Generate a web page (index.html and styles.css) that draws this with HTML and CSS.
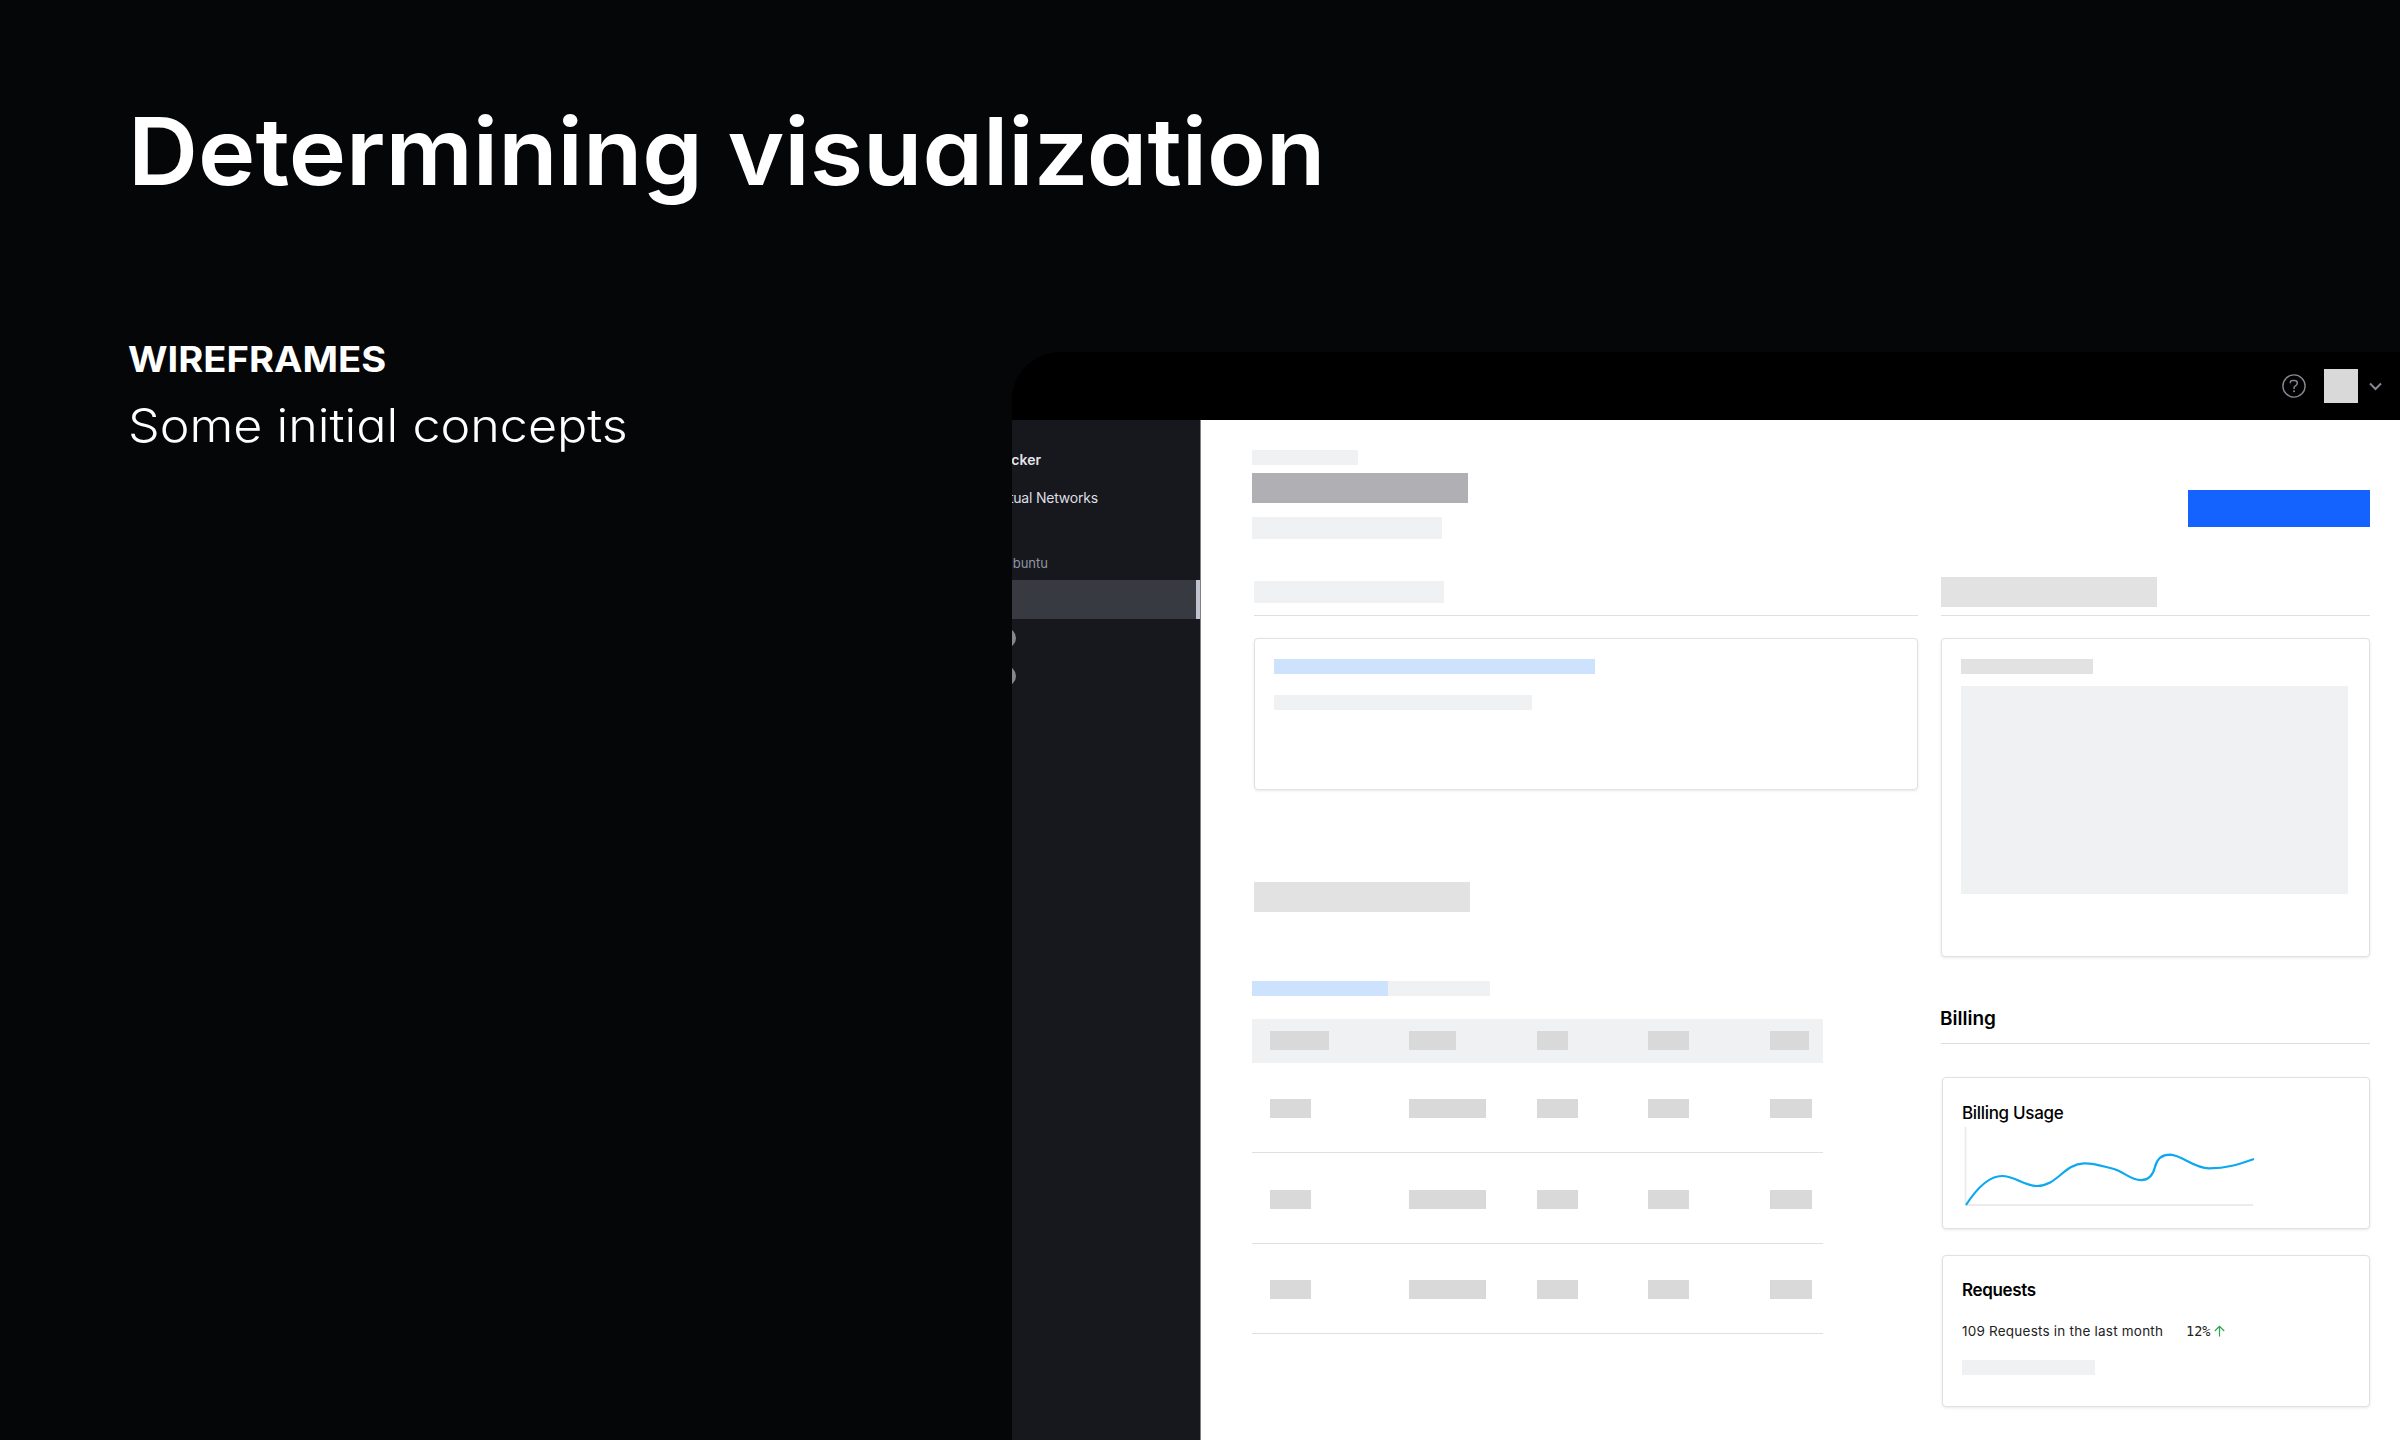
FILE: index.html
```html
<!DOCTYPE html>
<html lang="en">
<head>
<meta charset="utf-8">
<title>Determining visualization</title>
<link rel="stylesheet" href="styles.css">
</head>
<body>
<div class="slide">
  <section class="intro">
    <h1 class="title">Determining visualization</h1>
    <h2 class="eyebrow">WIREFRAMES</h2>
    <p class="lead">Some initial concepts</p>
  </section>
  <section class="app">
    <header class="topbar">
      <svg class="help" width="24" height="24" viewBox="0 0 24 24" fill="none" stroke="#858791" stroke-width="1.4"><circle cx="12" cy="12" r="11.1"/><path d="M8.3 9.300v-.6c0-1.300 1-2.200 2.400-2.200h1.700c1.700 0 2.900 1.100 2.900 2.600 0 1.100-.5 1.900-1.500 2.500-1.200.7-1.800 1.300-1.800 2.300v1" stroke-width="1.500"/><circle cx="12" cy="17.300" r="1" fill="#858791" stroke="none"/></svg>
      <div class="avatar"></div>
      <svg class="chevron" width="13" height="9" viewBox="0 0 13 9" fill="none" stroke="#858791" stroke-width="2"><path d="M1 1.500l5.500 5.500L12 1.500"/></svg>
    </header>
    <div class="body">
      <nav class="side">
        <div class="nav-item nav-strong">cker</div>
        <div class="nav-item nav-link">tual Networks</div>
        <div class="nav-item nav-group">buntu</div>
        <div class="nav-active"></div>
        <div class="nav-row"><span class="dot"></span></div>
        <div class="nav-row"><span class="dot"></span></div>
      </nav>
      <main class="content">
        <div class="page-head">
          <div>
            <div class="bar crumb"></div>
            <div class="bar name"></div>
            <div class="bar subtitle"></div>
          </div>
          <div class="action"></div>
        </div>
        <div class="columns">
          <div class="primary">
            <div class="section-head head-light"><div class="bar label-light"></div></div>
            <div class="card summary">
              <div class="bar link-line"></div>
              <div class="bar text-line"></div>
            </div>
            <div class="bar heading-mid"></div>
            <div class="tabs"><div class="tab-on"></div><div class="tab-off"></div></div>
            <div class="table">
              <div class="tr thead"><i class="w59"></i><i class="w47"></i><i class="w31"></i><i class="w41"></i><i class="w39"></i></div>
              <div class="tr row1"><i class="w41"></i><i class="w77"></i><i class="w41"></i><i class="w41"></i><i class="w42"></i></div>
              <div class="tr row2"><i class="w41"></i><i class="w77"></i><i class="w41"></i><i class="w41"></i><i class="w42"></i></div>
              <div class="tr row3"><i class="w41"></i><i class="w77"></i><i class="w41"></i><i class="w41"></i><i class="w42"></i></div>
            </div>
          </div>
          <aside class="secondary">
            <div class="section-head head-mid"><div class="bar label-mid"></div></div>
            <div class="card preview">
              <div class="bar preview-title"></div>
              <div class="preview-box"></div>
            </div>
            <h3 class="billing">Billing</h3>
            <div class="card usage">
              <h4 class="card-title">Billing Usage</h4>
              <svg class="chart" width="292" height="82" viewBox="0 0 292 82" fill="none">
                <path d="M2.500 2V80M2 80H290" stroke="#ebebed" stroke-width="1.800"/>
                <path d="M3 80C14 63 26 51 39 51C52 51 61 61 74 61C94 61 101 39 121 38.300C132 38 140 41.500 151 44C160 46.500 168 55.200 178 55.200C186 55.200 190 50 192 42C194 34 199 29.700 207 29.700C219 30 231 43.300 246 43.300C264 43.300 275 39.600 291 34" stroke="#0ca8f0" stroke-width="2.200"/>
              </svg>
            </div>
            <div class="card requests">
              <h4 class="card-title">Requests</h4>
              <div class="stat"><span class="stat-text">109 Requests in the last month</span><span class="pct">12%</span><svg class="up" width="11" height="12" viewBox="0 0 11 12" fill="none" stroke="#2da44e" stroke-width="1.200"><path d="M5.500 11.500V1.300M.8 6L5.500 1.300L10.200 6"/></svg></div>
              <div class="bar note"></div>
            </div>
          </aside>
        </div>
      </main>
    </div>
  </section>
</div>
</body>
</html>
```
FILE: styles.css
```css
* { box-sizing: border-box; }
body { margin: 0; background: #050608; }
h1, h2, h3, h4, p { margin: 0; }
.slide {
  width: 2400px; height: 1440px; overflow: hidden;
  display: grid; grid-template-columns: 1012px 1388px;
  background: #050608; color: #fff;
  font-family: Inter, "Liberation Sans", sans-serif;
}
.intro { padding: 95px 0 0 128px; white-space: nowrap; font-feature-settings: "cv11", "ss03"; }
/* Wide display cut: the three headings are stretched horizontally. */
.title, .eyebrow, .lead { transform-origin: 0 50%; }
.title { font-size: 93px; line-height: 113px; font-weight: 600; transform: scaleX(1.043); }
.eyebrow { margin-top: 130px; font-size: 35px; line-height: 42px; font-weight: 700; transform: scaleX(1.09); }
.lead { margin-top: 17px; font-size: 46px; line-height: 56px; font-weight: 300; transform: scaleX(1.092); }

.app { margin-top: 352px; height: 1088px; border-top-left-radius: 48px; overflow: hidden; color: #111; display: flex; flex-direction: column; }
.topbar { height: 68px; flex: none; background: #000; display: flex; align-items: center; justify-content: flex-end; padding-right: 18px; }
.avatar { width: 34px; height: 34px; background: #d9d9d9; margin: 0 11px 0 18px; }
.body { flex: 1; display: flex; min-height: 0; }

.side { width: 189px; background: #17181d; border-right: 1px solid #808085; overflow: hidden; }
.nav-item { display: flex; justify-content: flex-end; white-space: nowrap; }
.nav-strong { width: 29px; margin-top: 30px; height: 20px; line-height: 20px; font-size: 14px; font-weight: 600; color: #e4e5ea; }
.nav-link { width: 86px; margin-top: 18px; height: 20px; line-height: 20px; font-size: 14px; letter-spacing: -.2px; color: #dddee3; }
.nav-group { width: 36px; margin-top: 46px; height: 18px; line-height: 18px; font-size: 13px; color: #9195a3; }
.nav-active { margin: 8px -1px 0 0; height: 39px; background: #383a42; border-right: 5px solid #c0c4d0; }
.nav-row { height: 38px; display: flex; align-items: center; }
.dot { width: 20px; height: 20px; border-radius: 50%; background: #86878b; margin-left: -16px; }

.content { flex: 1; padding: 30px 30px 0 51px; background: #fff; }
.bar { background: #f0f1f3; }
.page-head { display: flex; justify-content: space-between; align-items: flex-start; }
.crumb { width: 106px; height: 15px; }
.name { width: 216px; height: 30px; margin-top: 8px; background: #b0afb4; }
.subtitle { width: 190px; height: 22px; margin-top: 14px; }
.action { width: 182px; height: 37px; margin-top: 40px; background: #1463ff; }

.columns { display: flex; justify-content: space-between; margin-top: 38px; }
.primary { width: 666px; padding-left: 2px; }
.secondary { width: 429px; }
.section-head { height: 39px; border-bottom: 1px solid #e0e0e2; }
.head-light { padding-top: 4px; }
.label-light { width: 190px; height: 22px; }
.label-mid { width: 216px; height: 30px; background: #e2e2e2; }
.card { border: 1px solid #e1e1e4; border-radius: 4px; box-shadow: 0 1px 3px rgba(30, 30, 60, .1); background: #fff; }
.summary { height: 152px; margin-top: 22px; padding: 20px 19px; }
.link-line { width: 321px; height: 15px; background: #cce2fd; }
.text-line { width: 258px; height: 15px; margin-top: 21px; }
.heading-mid { width: 216px; height: 30px; margin-top: 92px; background: #e2e2e2; }
.tabs { display: flex; margin: 69px 0 0 -2px; height: 15px; }
.tab-on { width: 136px; background: #cce2fd; }
.tab-off { width: 102px; background: #f0f1f3; }
.table { width: 571px; margin: 23px 0 0 -2px; }
.tr { display: grid; grid-template-columns: 139px 128px 111px 122px 53px; padding-left: 18px; border-bottom: 1px solid #e0e0e0; }
.tr i { height: 19px; background: #d9d9d9; }
.thead { height: 44px; padding-top: 12px; background: #f0f1f3; border: 0; }
.row1 { height: 90px; padding-top: 36px; }
.row2 { height: 91px; padding-top: 37px; }
.row3 { height: 90px; padding-top: 36px; }
.w31 { width: 31px; } .w39 { width: 39px; } .w41 { width: 41px; } .w42 { width: 42px; } .w47 { width: 47px; } .w59 { width: 59px; } .w77 { width: 77px; }

.preview { height: 319px; margin-top: 22px; padding: 20px 19px; }
.preview-title { width: 132px; height: 15px; background: #e2e2e2; }
.preview-box { height: 208px; margin-top: 12px; width: 387px; background: #f0f1f3; }
.billing { margin-top: 49px; height: 38px; padding-top: 1px; border-bottom: 1px solid #dededf; font-size: 19px; line-height: 24px; font-weight: 600; color: #000; text-indent: -1px; }
.usage { height: 152px; margin: 33px 0 0 1px; padding: 25px 20px 0; }
.card-title { font-size: 17px; line-height: 20px; color: #000; text-indent: -1px; }
.usage .card-title { font-weight: 550; letter-spacing: -.32px; }
.requests .card-title { font-weight: 600; padding-left: 1px; letter-spacing: -.35px; }
.chart { display: block; margin: 2px 0 0 0; }
.requests { height: 152px; margin: 26px 0 0 1px; padding: 24px 19px 0; }
.stat { display: flex; align-items: center; height: 20px; margin-top: 21px; white-space: nowrap; color: #222; }
.stat-text { font-size: 13.500px; letter-spacing: .22px; width: 224px; }
.pct { font-family: "DejaVu Sans Mono", monospace; font-size: 13.500px; width: 28px; }
.note { width: 133px; height: 15px; margin-top: 19px; }
```
